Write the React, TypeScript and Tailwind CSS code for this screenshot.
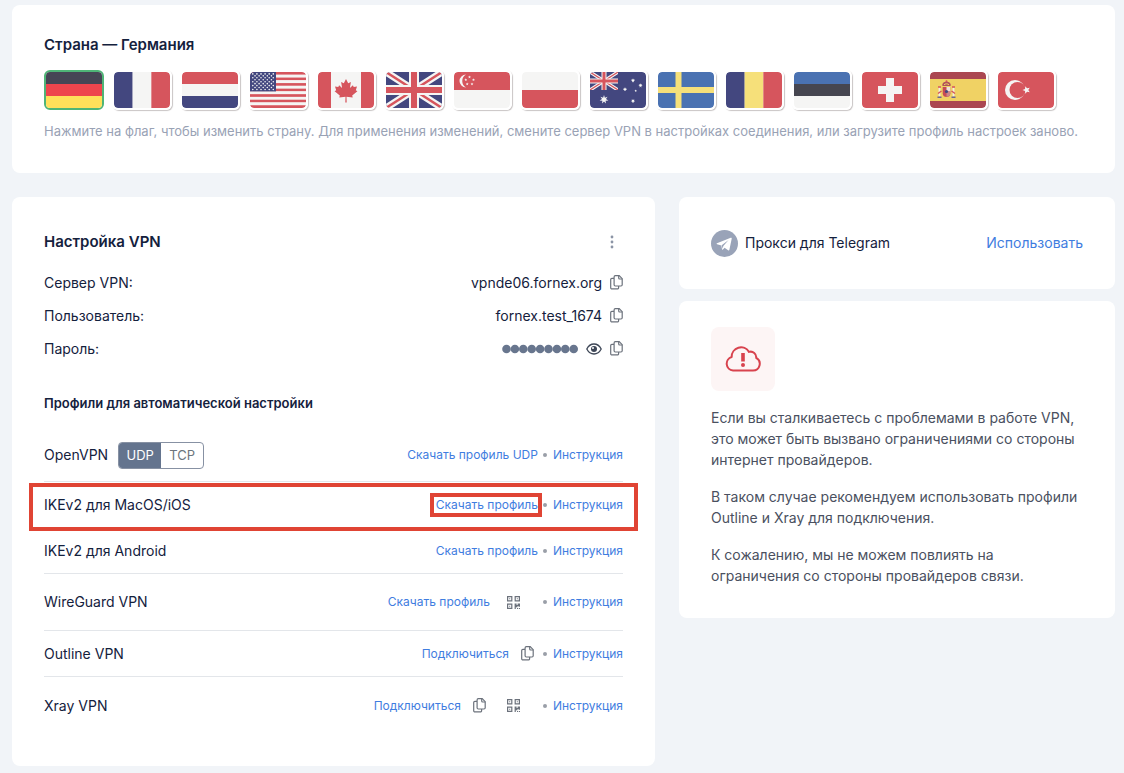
import { useState } from "react";
import type { ReactNode } from "react";
import clsx from "clsx";

const RED = "#d6555d";
const BLUE = "#43477f";
const WHITE = "#f5f5f4";
const YELLOW = "#f6e07a";

const star = (cx: number, cy: number, r: number, n = 5) => {
  const pts: string[] = [];
  for (let i = 0; i < n * 2; i++) {
    const k = i % 2 ? r * 0.45 : r;
    const a = (Math.PI * i) / n - Math.PI / 2;
    pts.push(`${cx + k * Math.cos(a)},${cy + k * Math.sin(a)}`);
  }
  return pts.join(" ");
};

function Bands({ colors, vertical }: { colors: string[]; vertical?: boolean }) {
  const size = (vertical ? 56 : 36) / colors.length;
  return (
    <>
      {colors.map((color, i) => (
        <rect
          key={i}
          x={vertical ? i * size : 0}
          y={vertical ? 0 : i * size}
          width={vertical ? size : 56}
          height={vertical ? 36 : size}
          fill={color}
        />
      ))}
    </>
  );
}

function UnionJack() {
  return (
    <>
      <rect width="56" height="36" fill={BLUE} />
      <path d="M0 0L56 36M56 0L0 36" stroke={WHITE} strokeWidth="7" />
      <path d="M0 0L56 36M56 0L0 36" stroke={RED} strokeWidth="2.4" />
      <path d="M28 0V36M0 18H56" stroke={WHITE} strokeWidth="10" />
      <path d="M28 0V36M0 18H56" stroke={RED} strokeWidth="6" />
    </>
  );
}

function UsaFlag() {
  const stars = [];
  for (let row = 0; row < 9; row++) {
    const count = row % 2 ? 5 : 6;
    for (let col = 0; col < count; col++) {
      stars.push(
        <circle
          key={`${row}-${col}`}
          cx={(row % 2 ? 5 : 2.8) + col * 4.1}
          cy={1.9 + row * 1.95}
          r="0.8"
          fill={WHITE}
        />
      );
    }
  }
  return (
    <>
      <Bands colors={Array.from({ length: 13 }, (_, i) => (i % 2 ? WHITE : RED))} />
      <rect width="26" height="19.4" fill={BLUE} />
      {stars}
    </>
  );
}

function SpainFlag() {
  return (
    <>
      <rect width="56" height="36" fill="#ab4751" />
      <rect y="7" width="56" height="22" fill="#f0d264" />
      <path d="M9.500 15.500v9M23.500 15.500v9" stroke="#f3efe2" strokeWidth="1.800" />
      <path d="M7.500 25.300h4M21.500 25.300h4" stroke="#6d6690" strokeWidth="1.400" />
      <path d="M8 21.500l3.500-2.500M25 21.500l-3.500-2.500M8 15h3M22 15h3" stroke={RED} strokeWidth="1.500" />
      <path d="M12.500 14c-.8-2.800 1.500-4.200 4-4.200s4.800 1.400 4 4.200z" fill="#b0525a" />
      <path d="M14 12.800c1-1.300 4-1.300 5 0" stroke="#f0d264" fill="none" />
      <path d="M12.700 15h7.600v6.500c0 4.700-7.600 4.700-7.600 0z" fill="#c64b55" />
      <path d="M16.500 15h3.800v4.500h-3.800z" fill="#eee2da" />
      <path d="M16.500 19.500h3.800v2c0 2-1.500 3-3.800 3.300z" fill="#c9878a" />
      <circle cx="16.500" cy="19.500" r="1.600" fill={BLUE} />
      <circle cx="16.500" cy="9.300" r="1" fill={RED} />
    </>
  );
}

const countries: { name: string; flag: ReactNode }[] = [
  { name: "Германия", flag: <Bands colors={["#464655", "#ee454d", "#ffe05a"]} /> },
  { name: "Франция", flag: <Bands vertical colors={[BLUE, WHITE, RED]} /> },
  { name: "Нидерланды", flag: <Bands colors={[RED, WHITE, BLUE]} /> },
  { name: "США", flag: <UsaFlag /> },
  {
    name: "Канада",
    flag: (
      <>
        <rect width="56" height="36" fill={WHITE} />
        <path d="M0 0H13V36H0zM43 0H56V36H43z" fill={RED} />
        <path
          d="M28 7l2.200 4.300 2.700-1.400-1 6.200 3-2.900.8 1.900 3.300-.5-1.200 3.600 1.600 1-5.200 4.300.5 2.100-6.200-.9.200 5.800h-1.400l.2-5.800-6.200.9.500-2.100-5.200-4.300 1.600-1-1.200-3.600 3.300.5.8-1.900 3 2.900-1-6.200 2.700 1.400z"
          fill={RED}
        />
      </>
    ),
  },
  { name: "Великобритания", flag: <UnionJack /> },
  {
    name: "Сингапур",
    flag: (
      <>
        <Bands colors={[RED, WHITE]} />
        <path d="M12 2.500a6.500 6.500 0 1 0 0 13a7.500 7.500 0 0 1 0-13z" fill={WHITE} />
        {[[15.500, 5], [19.500, 7.800], [18, 12], [13.200, 12], [11.800, 7.800]].map(([x, y]) => (
          <polygon key={`${x}-${y}`} points={star(x, y, 1.500)} fill={WHITE} />
        ))}
      </>
    ),
  },
  { name: "Польша", flag: <Bands colors={[WHITE, RED]} /> },
  {
    name: "Австралия",
    flag: (
      <>
        <rect width="56" height="36" fill={BLUE} />
        <svg width="28" height="18" viewBox="0 0 56 36">
          <UnionJack />
        </svg>
        <polygon points={star(14, 27.500, 4.500, 7)} fill={WHITE} />
        <polygon points={star(43, 8.500, 2.200, 7)} fill={WHITE} />
        <polygon points={star(50.500, 13.500, 2.200, 7)} fill={WHITE} />
        <polygon points={star(35, 17.300, 2.200, 7)} fill={WHITE} />
        <polygon points={star(43, 29, 2.200, 7)} fill={WHITE} />
        <polygon points={star(45.700, 18.800, 1.300)} fill={WHITE} />
      </>
    ),
  },
  {
    name: "Швеция",
    flag: (
      <>
        <rect width="56" height="36" fill="#4a72b2" />
        <path d="M20.500 0V36M0 18H56" stroke={YELLOW} strokeWidth="6" />
      </>
    ),
  },
  { name: "Румыния", flag: <Bands vertical colors={[BLUE, YELLOW, RED]} /> },
  { name: "Эстония", flag: <Bands colors={["#4a72b2", "#464650", WHITE]} /> },
  {
    name: "Швейцария",
    flag: (
      <>
        <rect width="56" height="36" fill={RED} />
        <path d="M24 6h8v8h8v8h-8v8h-8v-8h-8v-8h8z" fill={WHITE} />
      </>
    ),
  },
  { name: "Испания", flag: <SpainFlag /> },
  {
    name: "Турция",
    flag: (
      <>
        <rect width="56" height="36" fill={RED} />
        <circle cx="17" cy="18" r="10" fill={WHITE} />
        <circle cx="19.500" cy="18" r="8" fill={RED} />
        <polygon
          points={star(28.500, 18, 4)}
          fill={WHITE}
          transform="rotate(-18 28.500 18)"
        />
      </>
    ),
  },
];

function CopyButton({ label }: { label: string }) {
  return (
    <button aria-label={label} className="shrink-0 text-[#6c727c]">
      <svg width="13" height="15" viewBox="0 0 13 15" fill="none" stroke="currentColor" strokeWidth="1.200">
        <path d="M5.300.7h3.900l3 3v6.100a1.200 1.200 0 0 1-1.200 1.200H5.300a1.200 1.200 0 0 1-1.200-1.200V1.900A1.200 1.200 0 0 1 5.300.7z" />
        <path d="M8.700.7v2.300a1 1 0 0 0 1 1h2.500" />
        <path d="M4 3.300H1.900A1.200 1.200 0 0 0 .7 4.500v8.200a1.200 1.200 0 0 0 1.200 1.200h5.500a1.200 1.200 0 0 0 1.200-1.200V11" />
      </svg>
    </button>
  );
}

function QrButton() {
  return (
    <button aria-label="QR-код" className="flex h-10 w-12 items-center justify-center text-[#6c727c]">
      <svg width="13" height="13" viewBox="0 0 13 13" fill="none" stroke="currentColor">
        <path d="M.6.6h4.200v4.200H.6zM8.200.6h4.200v4.200H8.200zM.6 8.200h4.200v4.200H.6z" strokeWidth="1.200" />
        <path d="M2.200 2.200h1v1h-1zM9.800 2.200h1v1h-1zM2.200 9.800h1v1h-1z" fill="currentColor" stroke="none" />
        <path
          d="M7.600 7.600h2v1.500h1V7.600h2.400v3.200h-1.500v-.8h-1v1.200H8.800V13H7.600zM10 11.900h1.200V13H10zM12 11.900h1V13h-1z"
          fill="currentColor"
          stroke="none"
        />
      </svg>
    </button>
  );
}

function Field({ label, children }: { label: string; children: ReactNode }) {
  return (
    <div className="flex h-[33px] items-center justify-between">
      <dt>{label}</dt>
      <dd className="flex items-center gap-2">{children}</dd>
    </div>
  );
}

function MaskedPassword() {
  return (
    <svg width="76" height="10" viewBox="0 0 76 10" fill="#68768e" role="img" aria-label="Пароль скрыт">
      {Array.from({ length: 9 }, (_, i) => (
        <circle key={i} cx={4.5 + i * 8.4} cy="5" r="4.3" />
      ))}
    </svg>
  );
}

type ProfileProps = {
  title: string;
  action: string;
  copy?: boolean;
  qr?: boolean;
  marked?: boolean;
  children?: ReactNode;
};

function Profile({ title, action, copy, qr, marked, children }: ProfileProps) {
  return (
    <li
      className={clsx(
        "relative flex items-center justify-between border-b border-[#e3e6ea] last:border-b-0",
        qr ? "h-[57px]" : children ? "h-[53px]" : "h-[46px]"
      )}
    >
      <div className="flex items-center gap-[10px]">
        <span>{title}</span>
        {children}
      </div>
      <div className="flex items-center text-xs text-[#3f7de0]">
        <a href="#" className="relative">
          {action}
          {marked && (
            <span className="absolute -top-1 -right-1 -bottom-1 -left-1.5 border-4 border-[#e04434]" />
          )}
        </a>
        {copy && (
          <span className="flex pr-1 pl-3">
            <CopyButton label="Скопировать ключ" />
          </span>
        )}
        {qr && <QrButton />}
        <span className="mr-1.5 ml-[5px] size-1 rounded-full bg-[#9a9fa8]" />
        <a href="#">Инструкция</a>
      </div>
      {marked && (
        <span className="pointer-events-none absolute -inset-x-[15px] top-px -bottom-1 border-4 border-[#e04434]" />
      )}
    </li>
  );
}

function ProtocolSwitch({ value, onChange }: { value: string; onChange: (v: string) => void }) {
  return (
    <div className="flex h-[27px] overflow-hidden rounded-[4px] border border-[#8791a3] text-[13px]">
      {["UDP", "TCP"].map((item) => (
        <button
          key={item}
          aria-pressed={value === item}
          onClick={() => onChange(item)}
          className={clsx(
            "w-[42px]",
            value === item ? "bg-[#64748e] text-white" : "text-[#6c757d]"
          )}
        >
          {item}
        </button>
      ))}
    </div>
  );
}

export default function App() {
  const [country, setCountry] = useState("Германия");
  const [protocol, setProtocol] = useState("UDP");

  return (
    <main className="min-h-screen bg-[#f1f4f8] pt-[5px] pr-[9px] pb-[7px] pl-3 font-['Inter','Liberation_Sans',sans-serif] text-sm text-[#14213d]">
      <section className="rounded-lg bg-white px-8 pt-7 pb-8">
        <h2 className="text-[15px] leading-6 font-semibold">Страна — {country}</h2>
        <div className="mt-[13px] flex flex-wrap gap-2">
          {countries.map(({ name, flag }) => (
            <button
              key={name}
              aria-label={name}
              aria-pressed={country === name}
              onClick={() => setCountry(name)}
              className={clsx(
                "h-10 w-[60px] overflow-hidden rounded-md border-2",
                country === name ? "border-[#4fb577]" : "border-white shadow-[1px_1px_1px_#c9c5c5]"
              )}
            >
              <svg
                viewBox="0 0 56 36"
                className={clsx("block h-9 w-14", country !== name && "rounded-[4px]")}
              >
                {flag}
              </svg>
            </button>
          ))}
        </div>
        <p className="mt-[11px] text-[13px] leading-5 text-[#99a2b5]">
          Нажмите на флаг, чтобы изменить страну. Для применения изменений, смените сервер VPN в
          настройках соединения, или загрузите профиль настроек заново.
        </p>
      </section>

      <div className="mt-6 grid grid-cols-[minmax(0,1fr)_436px] items-start gap-6">
        <section className="rounded-lg bg-white px-8 pt-[31px] pb-8">
          <div className="flex h-7 items-center justify-between">
            <h2 className="text-[15px] leading-6 font-semibold">Настройка VPN</h2>
            <button aria-label="Меню" className="flex w-[22px] justify-center text-[#8b94a5]">
              <svg width="4" height="14" viewBox="0 0 4 14" fill="currentColor">
                <circle cx="2" cy="2" r="1.400" />
                <circle cx="2" cy="7" r="1.400" />
                <circle cx="2" cy="12" r="1.400" />
              </svg>
            </button>
          </div>

          <dl className="mt-[10px]">
            <Field label="Сервер VPN:">
              vpnde06.fornex.org
              <CopyButton label="Скопировать сервер" />
            </Field>
            <Field label="Пользователь:">
              fornex.test_1674
              <CopyButton label="Скопировать пользователя" />
            </Field>
            <Field label="Пароль:">
              <MaskedPassword />
              <button aria-label="Показать пароль" className="text-[#3d4656]">
                <svg width="16" height="12" viewBox="0 0 16 12" fill="none" stroke="currentColor">
                  <path d="M.8 6C2.500 2.700 5 1 8 1s5.500 1.700 7.200 5C13.500 9.300 11 11 8 11S2.500 9.300.8 6z" strokeWidth="1.300" />
                  <circle cx="8" cy="6" r="3" fill="currentColor" stroke="none" />
                  <circle cx="7" cy="4.900" r="1" fill="#fff" stroke="none" />
                </svg>
              </button>
              <CopyButton label="Скопировать пароль" />
            </Field>
          </dl>

          <h3 className="mt-7 text-[13px] leading-5 font-semibold">
            Профили для автоматической настройки
          </h3>
          <ul className="mt-4">
            <Profile title="OpenVPN" action={`Скачать профиль ${protocol}`}>
              <ProtocolSwitch value={protocol} onChange={setProtocol} />
            </Profile>
            <Profile title="IKEv2 для MacOS/iOS" action="Скачать профиль" marked />
            <Profile title="IKEv2 для Android" action="Скачать профиль" />
            <Profile title="WireGuard VPN" action="Скачать профиль" qr />
            <Profile title="Outline VPN" action="Подключиться" copy />
            <Profile title="Xray VPN" action="Подключиться" copy qr />
          </ul>
        </section>

        <div className="flex flex-col gap-3">
          <section className="flex h-[92px] items-center justify-between rounded-lg bg-white px-8">
            <div className="flex items-center gap-[7px]">
              <svg width="27" height="27" viewBox="0 0 27 27">
                <circle cx="13.500" cy="13.500" r="13.500" fill="#99a3b8" />
                <path
                  d="M6 13.200L19.700 7.800c.7-.2 1.200.1 1 1l-2.300 10.900c-.2.800-.7 1-1.300.6l-3.500-2.600-1.700 1.700c-.4.400-.8.300-.9-.2l-.6-3.700-4.300-1.300c-.7-.3-.7-.7-.1-1z"
                  fill="#fff"
                />
                <path d="M10.700 15.300l6.900-5.200-5.300 5.900-.6 2.700z" fill="#99a3b8" />
              </svg>
              <span>Прокси для Telegram</span>
            </div>
            <a href="#" className="text-[#3f7de0]">
              Использовать
            </a>
          </section>

          <section className="rounded-lg bg-white px-8 pt-[26px] pb-8">
            <div className="flex size-16 items-center justify-center rounded-lg bg-[#fdf5f5]">
              <svg width="36" height="26" viewBox="0 0 36 26" fill="none" stroke="#d8434e" strokeWidth="2">
                <path
                  d="M8 24.500H28a6.700 6.700 0 0 0 3.200-12.600A5.600 5.600 0 0 0 24 5.900 9.300 9.300 0 0 0 6.700 11 6.900 6.900 0 0 0 8 24.500z"
                  strokeLinejoin="round"
                />
                <path d="M18 7v8.500" strokeWidth="3.600" />
                <circle cx="18" cy="19" r="2" fill="#d8434e" stroke="none" />
              </svg>
            </div>
            <div className="mt-4 space-y-4 leading-[21px] text-[#4a5060]">
              <p>
                Если вы сталкиваетесь с проблемами в работе VPN, это может быть вызвано ограничениями со
                стороны интернет провайдеров.
              </p>
              <p>
                В таком случае рекомендуем использовать профили Outline и Xray для подключения.
              </p>
              <p>
                К сожалению, мы не можем повлиять на ограничения со стороны провайдеров связи.
              </p>
            </div>
          </section>
        </div>
      </div>
    </main>
  );
}
